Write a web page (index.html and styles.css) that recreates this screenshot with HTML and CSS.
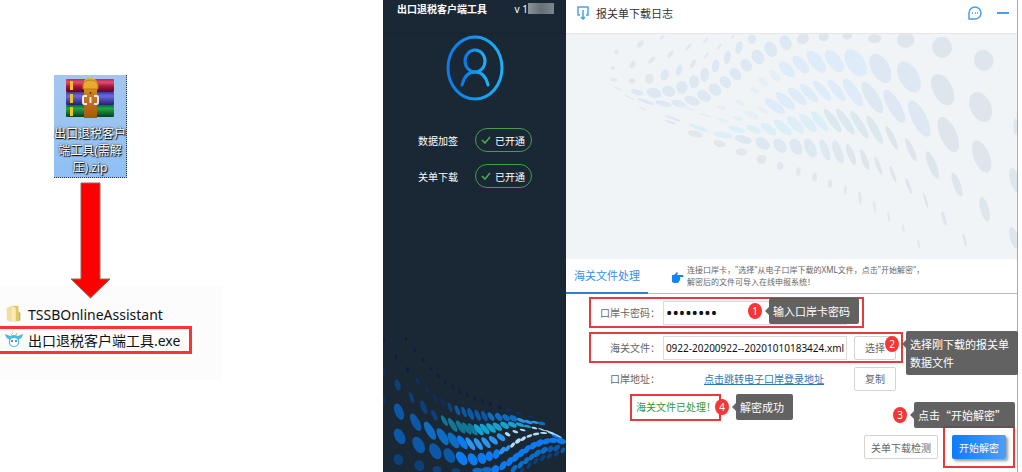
FILE: index.html
```html
<!DOCTYPE html>
<html lang="zh-CN">
<head>
    <meta charset="UTF-8">
    <title>出口退税客户端工具</title>
    <link rel="stylesheet" href="styles.css">
</head>
<body>

    <div class="page">
        <!-- Unpack guide -->
        <section class="guide">
            <div class="zip-file">
                <svg class="zip-icon" viewBox="0 0 48 42">
                    <defs>
                        <linearGradient id="bookRed" x2="0" y2="1"><stop offset="0" stop-color="#c0284c"/><stop offset=".25" stop-color="#dc5072"/><stop offset=".6" stop-color="#a3123a"/><stop offset="1" stop-color="#5c0820"/></linearGradient>
                        <linearGradient id="bookBlue" x2="0" y2="1"><stop offset="0" stop-color="#3a39a0"/><stop offset=".3" stop-color="#6b6be0"/><stop offset="1" stop-color="#23206e"/></linearGradient>
                        <linearGradient id="bookGreen" x2="0" y2="1"><stop offset="0" stop-color="#04702f"/><stop offset=".3" stop-color="#25a34c"/><stop offset="1" stop-color="#033f1d"/></linearGradient>
                        <linearGradient id="belt" x2="0" y2="1"><stop offset="0" stop-color="#eeb52e"/><stop offset=".4" stop-color="#c87d1c"/><stop offset="1" stop-color="#a8560f"/></linearGradient>
                    </defs>
                    <rect x="0" y="2" width="48" height="13" rx="1" fill="url(#bookRed)"/>
                    <rect x="0" y="15" width="48" height="13" rx="1" fill="url(#bookBlue)"/>
                    <rect x="0" y="28" width="48" height="12" rx="1" fill="url(#bookGreen)"/>
                    <path d="M4 4h3v9H4zM4 17h3v9H4zM4 30h3v9H4z" fill="#f5c21b"/>
                    <path d="M18 41V5q0-4 6-4t7 4v36z" fill="url(#belt)"/>
                    <path d="M17 12V8q1-5 7.500-5T32 8v4z" fill="#e6ac2f" stroke="#b87a16"/>
                    <path d="M21 19h-3q-1 0-1 2v4q0 2 1 2h3M28 19h3q1 0 1 2v4q0 2-1 2h-3M24.500 20v6" fill="none" stroke="#e8e8ee" stroke-width="2"/>
                    <circle cx="24.500" cy="16" r="1" fill="#5a2b05"/>
                </svg>
                <div class="zip-name">出口退税客户<br>端工具(需解<br>压).zip</div>
            </div>

            <svg class="arrow" viewBox="0 0 41 117">
                <path d="M11 1h19v96h10L20.500 116 1 97h10z" fill="#fe0000" stroke="#8c7058"/>
            </svg>

            <div class="file-list">
                <div class="file">
                    <svg class="file-icon" viewBox="0 0 18 20">
                        <path d="M1 3l5-2v18l-5-2z" fill="#f1e09a"/>
                        <path d="M6 1h8v17H6z" fill="#e3c765"/>
                        <path d="M6 1l5 2v16l-5-1z" fill="#f8ecb4"/>
                        <path d="M14 7l2 2v8l-2 1z" fill="#c9ad52"/>
                    </svg>
                    <span>TSSBOnlineAssistant</span>
                </div>
                <div class="file file-marked">
                    <svg class="file-icon" viewBox="0 0 18 16">
                        <path d="M0 2q3 1 5 2 4-2 8 0 2-1 5-2-1 5-4 5 1 8-5 8T4 7Q1 7 0 2z" fill="#4cb8e4"/>
                        <ellipse cx="9" cy="10" rx="4" ry="4" fill="#fff"/>
                        <path d="M6 3l2-2M11 3l1-2" stroke="#d6b25a"/>
                        <circle cx="7" cy="9" r="1" fill="#2b6f95"/>
                        <circle cx="11" cy="9" r="1" fill="#2b6f95"/>
                    </svg>
                    <span>出口退税客户端工具.exe</span>
                </div>
            </div>
        </section>

        <!-- Client sidebar -->
        <aside class="sidebar">
            <div class="sidebar-title">
                <strong>出口退税客户端工具</strong>
                <span class="version">v 1</span>
                <span class="mosaic"></span>
            </div>
            <svg class="avatar" viewBox="0 0 58 66">
                <defs>
                    <linearGradient id="ring" x2="1" y2="0"><stop offset="0" stop-color="#0b7be6"/><stop offset="1" stop-color="#1ab2f8"/></linearGradient>
                </defs>
                <g fill="none" stroke="url(#ring)" stroke-width="3">
                    <ellipse cx="29" cy="33" rx="27" ry="31"/>
                    <ellipse cx="29" cy="26" rx="10" ry="11"/>
                    <path d="M16 50q3-13 13-13t13 13" stroke-linecap="round"/>
                </g>
            </svg>
            <div class="service">
                <span>数据加签</span>
                <span class="pill"><svg viewBox="0 0 10 8"><path d="M1 4l3 3 5-6"/></svg>已开通</span>
            </div>
            <div class="service">
                <span>关单下载</span>
                <span class="pill"><svg viewBox="0 0 10 8"><path d="M1 4l3 3 5-6"/></svg>已开通</span>
            </div>
            <svg class="sidebar-wave" id="sidebarWave" viewBox="11 280 549 416"></svg>
        </aside>

        <!-- Download log window -->
        <main class="window">
            <header class="window-bar">
                <svg class="log-icon" viewBox="0 0 12 14"><path d="M3 9H1V1h10v8H9M6 4v9M4 11l2 2 2-2"/></svg>
                <h1>报关单下载日志</h1>
                <button class="icon-button" type="button" aria-label="消息">
                    <svg viewBox="0 0 14 14"><path d="M1 13V7a6 6 0 1 1 6 6zM4 7h1M7 7h1M9 7h1"/></svg>
                </button>
                <button class="icon-button" type="button" aria-label="最小化">
                    <svg viewBox="0 0 14 14"><path d="M1 7h12" stroke-width="2"/></svg>
                </button>
            </header>

            <svg class="hero" id="heroWave" viewBox="3 102 1374 675" preserveAspectRatio="xMaxYMin slice"></svg>

            <div class="tab-bar">
                <button class="tab" type="button">海关文件处理</button>
                <svg class="hand" viewBox="0 0 12 12"><path d="M0 4h2l3-3 1 1-1 2h6q1 1 0 2H8v1q1 1 0 1v1q0 1-1 1v1q-1 1-2 1H2L0 11z"/></svg>
                <p>连接口岸卡，"选择"从电子口岸下载的XML文件，点击"开始解密"，<br>解密后的文件可导入在线申报系统！</p>
            </div>

            <form class="decrypt-form">
                <div class="row row-password marked">
                    <label for="cardPassword">口岸卡密码：</label>
                    <input class="password" id="cardPassword" type="password" value="12345678">
                    <div class="note note-password"><span class="badge">1</span><span class="tip">输入口岸卡密码</span></div>
                </div>
                <div class="row row-file marked">
                    <label for="customsFile">海关文件：</label>
                    <input id="customsFile" type="text" value="20200922-20200922--20201010183424.xml">
                    <button type="button">选择</button>
                    <div class="note note-file"><span class="badge">2</span><span class="tip">选择刚下载的报关单<br>数据文件</span></div>
                </div>
                <div class="row row-file">
                    <span class="label">口岸地址：</span>
                    <div class="link-cell"><a href="#">点击跳转电子口岸登录地址</a></div>
                    <button type="button">复制</button>
                </div>
                <div class="status marked">
                    海关文件已处理！
                    <div class="note note-status"><span class="badge">4</span><span class="tip">解密成功</span></div>
                </div>
                <div class="actions">
                    <button type="button">关单下载检测</button>
                    <div class="action-main marked">
                        <button class="primary" type="submit">开始解密</button>
                        <div class="note note-start"><span class="badge">3</span><span class="tip">点击“开始解密”</span></div>
                    </div>
                </div>
            </form>
        </main>
    </div>

    <script src="wave.js"></script>
</body>
</html>
```
FILE: styles.css
```css
* {
    box-sizing: border-box;
}

body {
    margin: 0;
    background: #fff;
    font-family: "Noto Sans", "Noto Sans CJK SC", sans-serif;
    font-size: 10px;
    color: #666;
}

button,
input {
    font-family: inherit;
    font-size: 10px;
}

.page {
    display: grid;
    grid-template-columns: 383fr 183fr 456fr;
    min-height: 100vh;
}

/* guide */
.guide {
    padding-top: 75px;
}

.zip-file {
    width: 73px;
    height: 103px;
    margin-left: 54px;
    padding-top: 2px;
    background: linear-gradient(#a4c6ee, #8fc0f4);
    border-right: 1px dotted #333;
    border-bottom: 1px dotted #333;
    text-align: center;
}

.zip-icon {
    display: block;
    width: 48px;
    height: 42px;
    margin: 0 auto 6px;
}

.zip-name {
    font-size: 12px;
    line-height: 17px;
    color: #fff;
    white-space: nowrap;
    text-shadow: 1px 1px 1px #000, 0 0 2px #000;
}

.arrow {
    display: block;
    position: relative;
    width: 41px;
    height: 117px;
    margin: 4px 0 -13px 70px;
}

.file-list {
    width: 222px;
    height: 94px;
    padding-top: 16px;
    background: #fcfcfc;
}

.file {
    display: flex;
    align-items: center;
    gap: 5px;
    height: 24px;
    padding-left: 5px;
    font-size: 14px;
    color: #111;
}

.file-icon {
    width: 18px;
    height: 18px;
}

.file-marked {
    width: 192px;
    height: 28px;
    border: 3px solid #f93434;
    border-left: none;
}

/* sidebar */
.sidebar {
    display: flex;
    flex-direction: column;
    background: #1a2836;
    color: #fff;
}

.sidebar-title {
    display: flex;
    align-items: center;
    height: 34px;
    padding: 0 12px 16px 14px;
    border-bottom: 1px solid #17232f;
    white-space: nowrap;
}

.version {
    margin-left: auto;
}

.mosaic {
    width: 26px;
    height: 11px;
    background: linear-gradient(90deg, #8a929a, #66707a 50%, #7c858d);
}

.avatar {
    width: 58px;
    height: 66px;
    margin: 1px auto 27px;
}

.service {
    display: flex;
    align-items: center;
    gap: 17px;
    margin: 0 0 12px 35px;
}

.pill {
    display: flex;
    align-items: center;
    gap: 4px;
    height: 24px;
    padding: 0 6px 0 5px;
    border: 1px solid #43a047;
    border-radius: 12px;
}

.pill svg {
    width: 10px;
    height: 8px;
    fill: none;
    stroke: #4caf50;
    stroke-width: 1.5;
}

.sidebar-wave {
    width: 100%;
    margin-top: auto;
}

/* window */
.window {
    display: flex;
    flex-direction: column;
    min-width: 0;
    margin-right: 4px;
    border-right: 1px solid #aaa;
}

.window-bar {
    display: flex;
    align-items: center;
    gap: 14px;
    height: 34px;
    padding: 0 7px 7px 11px;
    border-bottom: 1px solid #e6e6e8;
}

.window-bar h1 {
    margin: 0 auto 0 -7px;
    font-size: 11px;
    font-weight: normal;
    color: #333;
}

.log-icon {
    width: 12px;
    height: 14px;
    fill: none;
    stroke: #4aa3ea;
    stroke-width: 1.5;
}

.icon-button {
    display: flex;
    padding: 0;
    border: none;
    background: none;
}

.icon-button svg {
    width: 14px;
    height: 14px;
    fill: none;
    stroke: #45a1ee;
    stroke-width: 1.5;
}

.hero {
    display: block;
    width: 100%;
    height: 225px;
    background: #f0f4f7;
}

.tab-bar {
    display: flex;
    align-items: center;
    height: 35px;
    border-bottom: 1px solid #bbb;
}

.tab {
    height: 35px;
    width: 82px;
    padding: 0 7px;
    border: none;
    border-bottom: 2px solid #2f7fd0;
    background: none;
    font-size: 11px;
    color: #3a8ee6;
    white-space: nowrap;
}

.hand {
    width: 12px;
    height: 12px;
    margin: 2px 3px 0 24px;
    fill: #1683f0;
}

.tab-bar p {
    margin: 0;
    font-size: 8px;
    line-height: 12px;
    white-space: nowrap;
}

.decrypt-form {
    padding: 3px 2px 4px 23px;
}

.row {
    display: flex;
    align-items: center;
    position: relative;
    height: 31px;
    border: 2px solid transparent;
}

.row-password {
    width: 275px;
    margin-bottom: 4px;
}

.row-file {
    width: 314px;
}

.marked {
    border: 2px solid #e53b3b;
}

.row label,
.label {
    width: 72px;
    padding-right: 3px;
    text-align: right;
    white-space: nowrap;
}

.row input,
.link-cell {
    width: 184px;
    height: 24px;
    padding: 0 2px;
}

.row input {
    border: 1px solid #dcdcdc;
    color: #111;
}

.row .password {
    padding: 0 2px;
    font-size: 17px;
}

.link-cell {
    padding-left: 41px;
    line-height: 24px;
}

a {
    color: #2d76b8;
}

.decrypt-form button {
    height: 24px;
    padding: 0 6px;
    border: 1px solid #d4d4d4;
    border-radius: 2px;
    background: #fff;
    color: #666;
    white-space: nowrap;
}

.row button {
    width: 42px;
    margin-left: 7px;
}

.status {
    position: relative;
    width: 91px;
    height: 27px;
    margin-left: 41px;
    padding-left: 4px;
    line-height: 23px;
    color: #2e9a3a;
    white-space: nowrap;
}

.actions {
    display: flex;
    justify-content: flex-end;
    align-items: center;
    gap: 5px;
    margin-top: 5px;
}

.action-main {
    position: relative;
    padding: 7px;
}

.decrypt-form .primary {
    display: block;
    width: 54px;
    border: none;
    background: linear-gradient(90deg, #0c7cfb, #4b9ff8);
    box-shadow: 2px 2px 3px #999;
    color: #fff;
}

/* numbered notes */
.note {
    position: absolute;
    z-index: 1;
    display: flex;
    align-items: flex-start;
    gap: 7px;
}

.note-password {
    top: -1px;
    left: 157px;
}

.note-file {
    top: -3px;
    left: 294px;
}

.note-status {
    top: -2px;
    left: 83px;
}

.note-start {
    top: -26px;
    right: -2px;
}

.badge {
    width: 14px;
    height: 16px;
    margin-top: 5px;
    border-radius: 50%;
    background: #f73535;
    line-height: 16px;
    text-align: center;
    color: #fff;
}

.tip {
    position: relative;
    padding: 4px 9px 4px 4px;
    border-radius: 2px;
    background: rgba(85, 85, 85, 0.92);
    font-family: "Noto Sans CJK SC", sans-serif;
    font-size: 11px;
    line-height: 18px;
    color: #fff;
    white-space: nowrap;
}

.tip::before {
    content: "";
    position: absolute;
    top: 9px;
    left: -4px;
    border: 4px solid transparent;
    border-left: none;
    border-right-color: #666;
}
```
FILE: wave.js
```js
// every dot is [x, y, rx, ry, angle]
const heroDots = [
    { fill: '#e3e7ed', dots: [
        [247,132,7,13,45],[313,112,4,9,50],[391,142,4,13,40],[443,121,3,12,42],[484,140,3,11,35],[337,163,6,13,40],[445,166,3,11,35],[405,191,6,14,25],[224,194,8,11,30],[281,180,6,14,45],[274,236,13,15,0],[222,242,9,8,0],[175,157,8,6,0],[168,240,10,5,0],[165,204,7,5,0],[525,110,3,6,40],
        [412,402,9,23,-75],[484,431,10,19,-75],[550,456,11,17,-85],[611,478,15,14,0],[667,497,10,12,0],[721,515,7,13,5],[770,532,7,13,0],[816,551,6,13,0],[862,571,4,13,0],[906,593,5,20,-5],[949,619,4,18,-8],[992,650,3,15,-8],[1036,686,3,14,-10],[1082,731,3,14,-8],
        [337,367,4,18,-72],[253,325,2,14,-65],[180,266,2,14,-65],[215,292,2,20,-65]
    ] },
    { fill: '#dfe5ec', dots: [
        [735,116,18,16,-30],[797,110,15,13,0],[868,108,14,11,0],[950,116,20,13,0],[1043,120,26,23,0],[1152,142,30,32,-20],[1277,181,29,32,-20],[1154,269,29,51,-28],[1268,321,31,47,-25],[1372,380,6,25,0],
        [1171,404,25,57,-24],[1271,470,24,51,-22],[1370,540,14,38,-15],[1001,413,9,39,-26],[1058,448,9,38,-24],[1123,495,12,44,-22],[1197,554,11,38,-20],[1280,628,13,38,-15],[1368,713,12,34,-15],
        [879,464,10,34,-20],[920,479,9,33,-20],[961,497,6,29,-22],[1005,523,5,27,-20],[1052,558,5,26,-20],[1103,601,4,24,-16],[1158,655,5,23,-16],[1220,721,4,20,-14]
    ] },
    { fill: '#dde8f3', dots: [
        [363,210,9,17,20],[320,225,12,17,15],[473,198,11,20,10],[508,172,10,20,10],[543,143,10,20,15],[582,118,12,14,0],
        [440,224,13,21,5],[408,245,15,20,0],[372,262,17,19,0],[332,274,16,20,-70],[288,279,15,23,-75],[238,277,8,20,-75],
        [683,128,17,23,-20],[638,148,18,24,-25],[600,171,18,23,-30],[565,196,16,20,-35],[532,222,15,21,-40],[502,246,15,20,-45],[471,269,16,21,-50],[438,288,15,22,-60],[402,302,13,24,-68],[362,311,10,23,-72],[316,311,8,25,-75],[264,305,5,28,-72],
        [556,418,12,26,-75],[614,430,16,24,-55],[666,437,17,24,-40],[714,440,17,26,-30],[757,444,16,31,-25],[801,450,12,34,-22],[840,456,13,37,-20],[344,355,4,26,-70],
        [967,205,27,48,-30],[1053,231,29,51,-30],[943,293,19,54,-32],[1009,319,19,57,-30],[1084,356,22,60,-27]
    ] },
    { fill: '#deebf8', dots: [
        [686,208,16,30,-45],[728,194,16,33,-42],[775,185,19,40,-40],[829,183,20,39,-38],[893,189,27,46,-34],
        [650,318,14,36,-55],[682,303,15,36,-50],[718,289,14,36,-48],[753,279,13,36,-45],[793,272,13,38,-42],[836,271,13,40,-38],[885,277,17,49,-34]
    ] },
    { fill: '#e6eef6', dots: [
        [650,227,11,22,-45],[616,246,10,18,-55],[580,345,10,24,-65],[614,330,6,18,-60],[540,355,6,15,-70],[495,361,5,18,-75],[440,345,4,20,-75],[390,325,4,24,-70],[490,323,6,14,-70],[545,308,6,14,-65],[590,270,7,14,-60]
    ] },
    { fill: '#dceef6', dots: [
        [422,384,6,32,-70],[495,405,9,28,-80],[536,388,8,26,-75],[587,388,10,24,-65],[632,387,12,27,-55],[674,382,13,33,-50],[712,374,14,34,-45],[750,368,14,36,-42],[785,363,12,38,-40]
    ] },
    { fill: '#dbe9ee', dots: [
        [824,362,12,42,-36],[862,365,12,46,-34],[904,374,12,48,-32],[950,389,12,48,-28]
    ] }
];

const sidebarDots = [
    { fill: '#0d1c40', dots: [
        [14,304,3,6,0],[80,297,3,5,0],[107,332,3,6,-10],[131,361,3,6,-15],[154,387,3,6,-15],[177,408,3,8,-15],[198,427,3,8,-15],[220,441,3,8,-15],[241,455,3,9,-15],[264,466,3,8,-15],[286,477,4,8,-15],[309,485,4,8,-30],[333,494,4,7,-45],[361,503,5,7,-60],[51,352,3,8,-15],[85,391,4,9,-15]
    ] },
    { fill: '#102f5e', dots: [
        [388,511,5,8,-80],[420,522,5,8,-80],[455,531,4,9,-80],[115,424,5,12,-20],[142,450,4,11,-20],[167,475,5,12,-20],[190,488,5,12,-20],[14,395,4,12,0],[14,483,4,14,0]
    ] },
    { fill: '#0d3f78', dots: [
        [55,436,8,18,-15],[97,474,6,17,-20],[133,503,8,22,-22],[165,527,7,18,-25],[212,503,6,14,-20],[57,660,14,17,-20],[120,678,14,17,-30],[173,690,13,11,0],[230,694,13,8,0],[428,692,5,10,30],[449,678,5,10,30],[470,664,5,11,35],[490,655,6,11,35],[510,649,6,10,40],[532,642,6,10,40]
    ] },
    { fill: '#0c57a6', dots: [
        [59,516,13,26,-22],[109,548,12,29,-28],[61,590,15,25,-28],[118,616,16,27,-30],[168,635,16,26,-30],[210,648,15,24,-30],[234,512,6,16,-22],[254,517,6,17,-22],[274,523,8,19,-24],[295,527,7,18,-24],[315,529,7,17,-26],[513,628,8,11,45],[532,625,7,12,45],[551,632,6,9,30]
    ] },
    { fill: '#0d6cc4', dots: [
        [152,573,12,31,-30],[190,591,12,29,-32],[222,602,12,27,-32],[335,531,7,15,-35],[358,532,8,14,-40],[380,534,8,13,-50],[402,536,8,13,-60],[487,551,5,11,-80],[295,692,16,8,0],[323,690,15,8,0],[404,687,7,13,35],[424,675,7,13,35],[441,663,7,12,35],[457,652,7,12,40],[474,641,8,13,45],[494,632,8,12,45]
    ] },
    { fill: '#0d7af0', dots: [
        [249,608,10,24,-35],[247,656,14,23,-35],[280,659,13,20,-30],[308,656,13,17,-20],[330,650,11,15,0],[351,643,10,15,15],[348,689,11,13,30],[371,678,9,15,30],[391,666,9,15,30],[409,653,9,15,35],[426,640,9,14,35],[443,629,8,14,35],[462,618,9,13,45],[481,610,9,13,55],[502,605,8,13,70],[522,602,8,13,90],[545,605,8,14,-75],[530,590,5,14,-65],[550,602,5,12,-60]
    ] },
    { fill: '#2b94ee', dots: [
        [273,612,8,23,-35],[297,613,8,21,-35],[320,609,8,20,-40],[342,602,8,17,-48],[365,593,8,15,-50],[369,633,7,13,40],[385,626,6,11,40],[425,542,5,13,-65],[447,547,5,13,-70],[467,548,4,11,-75]
    ] },
    { fill: '#117797', dots: [
        [195,543,6,18,-30],[220,556,8,24,-32],[244,562,8,23,-34],[262,566,7,22,-36],[280,569,8,22,-38]
    ] },
    { fill: '#16a2cf', dots: [
        [298,570,8,21,-40],[316,568,8,20,-42],[335,565,8,19,-46],[354,561,8,17,-50],[376,557,8,15,-56],[399,555,7,14,-65],[422,555,5,13,-70],[444,560,4,11,-75]
    ] },
    { fill: '#b7dbf7', dots: [
        [385,584,5,9,-60],[408,576,4,9,-70],[430,571,3,9,-75],[400,616,5,9,40],[416,604,6,10,50],[432,597,5,9,55],[450,589,4,9,70],[470,583,4,10,80],[493,580,3,11,-85],[516,580,3,11,-70],[465,565,3,9,-75],[488,570,2,12,-70],[510,577,2,13,-65],[535,588,2,14,-62]
    ] }
];

function drawWave(svgId, groups) {
    const svg = document.getElementById(svgId);
    groups.forEach(group => {
        group.dots.forEach(([x, y, rx, ry, angle]) => {
            const dot = document.createElementNS('http://www.w3.org/2000/svg', 'ellipse');
            dot.setAttribute('cx', x);
            dot.setAttribute('cy', y);
            dot.setAttribute('rx', rx);
            dot.setAttribute('ry', ry);
            dot.setAttribute('fill', group.fill);
            dot.setAttribute('transform', `rotate(${angle} ${x} ${y})`);
            svg.appendChild(dot);
        });
    });
}

drawWave('heroWave', heroDots);
drawWave('sidebarWave', sidebarDots);

// keep the end of the file name in view
const customsFile = document.getElementById('customsFile');
customsFile.scrollLeft = customsFile.scrollWidth;
```
